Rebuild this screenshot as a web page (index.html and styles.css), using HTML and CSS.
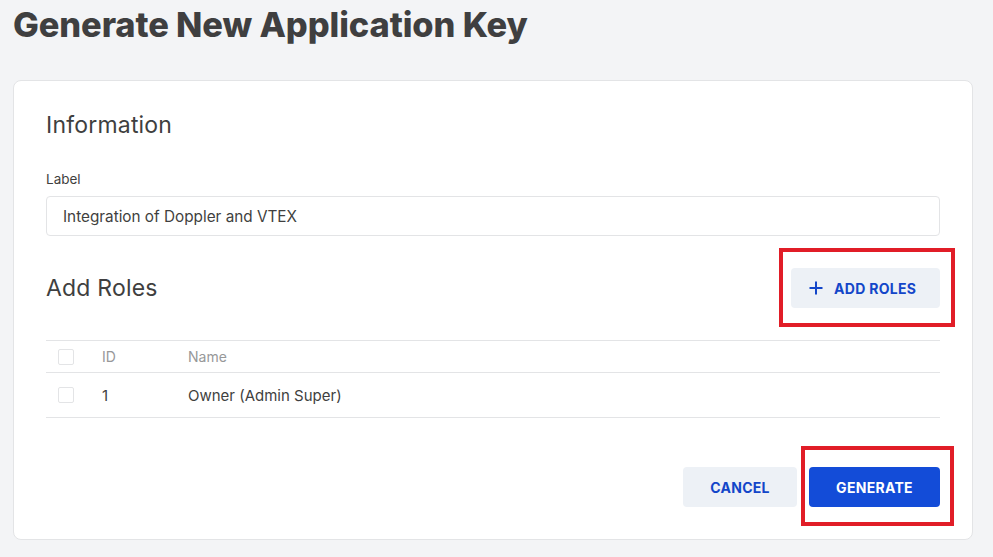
FILE: index.html
```html
<!DOCTYPE html>
<html lang="en">
<head>
<meta charset="utf-8">
<title>Generate New Application Key</title>
<link rel="stylesheet" href="styles.css">
</head>
<body>
<main class="page">
  <h1 class="title">Generate New Application Key</h1>
  <section class="card">
    <h2 class="section-title">Information</h2>
    <label class="field-label" for="label">Label</label>
    <input class="input" id="label" type="text" value="Integration of Doppler and VTEX">
    <div class="roles-head">
      <h2 class="section-title">Add Roles</h2>
      <button class="btn btn-secondary btn-add highlight highlight-add" type="button">
        <svg class="plus" width="14" height="14" viewBox="0 0 14 14" aria-hidden="true"><path d="M7 0.5V13.5M0.5 7H13.5" stroke="currentColor" stroke-width="2" fill="none"/></svg>
        <span>Add Roles</span>
      </button>
    </div>
    <div class="table">
      <div class="row row-head">
        <span class="cell cell-check"><span class="checkbox"></span></span>
        <span class="cell cell-id">ID</span>
        <span class="cell cell-name">Name</span>
      </div>
      <div class="row row-body">
        <span class="cell cell-check"><span class="checkbox"></span></span>
        <span class="cell cell-id">1</span>
        <span class="cell cell-name">Owner (Admin Super)</span>
      </div>
    </div>
    <div class="actions">
      <button class="btn btn-secondary btn-cancel" type="button">Cancel</button>
      <button class="btn btn-primary btn-generate highlight highlight-gen" type="button">Generate</button>
    </div>
  </section>
</main>
</body>
</html>
```

FILE: styles.css
```css
* { box-sizing: border-box; }
html, body { margin: 0; padding: 0; }
body {
  background: #f3f4f6;
  font-family: Inter, "Noto Sans", sans-serif;
  color: #3f3f40;
}
.page {
  padding: 0 20px 0 13px;
}
.title {
  margin: 0;
  padding-top: 3px;
  font-size: 34.4px;
  line-height: 44px;
  font-weight: 800;
  color: #3f3f40;
  letter-spacing: -0.1px;
}
.card {
  margin-top: 33px;
  background: #fff;
  border: 1px solid #e3e4e6;
  border-radius: 8px;
  padding: 29px 32px 32px 32px;
  height: 460px;
}
.section-title {
  margin: 0;
  font-size: 23px;
  line-height: 30px;
  font-weight: 400;
  letter-spacing: 0.2px;
  color: #3f3f40;
}
.field-label {
  display: block;
  margin-top: 29px;
  font-size: 13.5px;
  line-height: 20px;
  color: #3f3f40;
}
.input {
  display: block;
  width: 100%;
  height: 40px;
  margin-top: 7px;
  border: 1px solid #e3e4e6;
  border-radius: 4px;
  padding: 0 16px;
  font-family: inherit;
  font-size: 15.3px;
  color: #3f3f40;
  background: #fff;
  outline: none;
}
.roles-head {
  margin-top: 32px;
  display: flex;
  align-items: center;
  justify-content: space-between;
}
.btn {
  font-family: inherit;
  font-weight: 700;
  font-size: 14px;
  text-transform: uppercase;
  letter-spacing: 0.3px;
  border: none;
  border-radius: 4px;
  height: 40px;
  cursor: pointer;
}
.btn-secondary {
  background: #edf1f6;
  color: #1346c9;
}
.btn-primary {
  background: #134cd8;
  color: #fff;
}
.btn-add {
  display: flex;
  align-items: center;
  gap: 11px;
  width: 149px;
  padding: 0 0 0 18px;
}
.plus { flex: none; }
.highlight { position: relative; }
.highlight::after {
  content: "";
  position: absolute;
  border: 4px solid #e11d27;
  pointer-events: none;
}
.highlight-add::after {
  top: -20px; bottom: -19px; left: -12px; right: -15px;
}
.highlight-gen::after {
  top: -21px; bottom: -19px; left: -8px; right: -14px;
}
.table {
  margin-top: 32px;
  border-top: 1px solid #e3e4e6;
}
.row {
  display: flex;
  align-items: center;
  border-bottom: 1px solid #e3e4e6;
}
.row-head {
  height: 32px;
  font-size: 14px;
  color: #979899;
}
.row-body {
  height: 45px;
  font-size: 15px;
  color: #3f3f40;
}
.cell-check {
  width: 56px;
  padding-left: 12px;
  display: flex;
}
.checkbox {
  width: 16px;
  height: 16px;
  border: 1px solid #e3e4e6;
  border-radius: 2px;
  background: #fff;
}
.cell-id { width: 86px; }
.cell-name { flex: 1; }
.actions {
  margin-top: 49px;
  display: flex;
  justify-content: flex-end;
  gap: 12px;
}
.btn-cancel { width: 114px; }
.btn-generate { width: 131px; }
```
